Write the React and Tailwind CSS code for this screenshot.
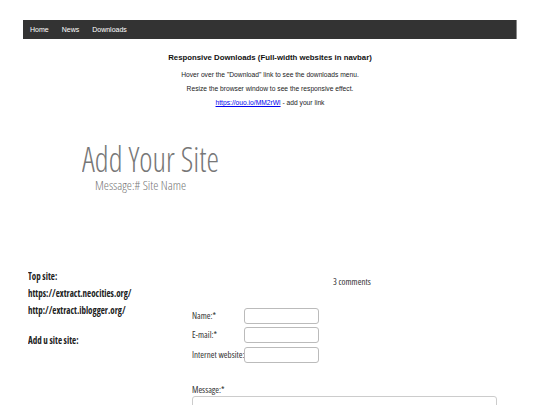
const NAV_LINKS = ['Home', 'News', 'Downloads']

// Condensed cut of Open Sans via the width axis
function Narrow({ children, className = '' }) {
  return (
    <span className={`inline-block origin-left whitespace-nowrap font-['Open_Sans',sans-serif] font-stretch-[75%] ${className}`}>
      {children}
    </span>
  )
}

function Field({ label }) {
  return (
    <div className="flex items-center h-[19.5px]">
      <span className="w-[52px] text-[9px] text-[#333]">
        <Narrow>{label}</Narrow>
      </span>
      <input
        type="text"
        className="w-[75px] h-[16px] border border-[#bbb] rounded-[3px] bg-white outline-none"
      />
    </div>
  )
}

export default function App() {
  return (
    <div className="w-[540px] h-[405px] overflow-hidden bg-white font-['Liberation_Sans',Arial,sans-serif]">
      {/* Top navbar */}
      <div className="pt-[20px] px-[23px]">
        <nav className="h-[19px] bg-[#333] border-r border-[#888] flex items-center gap-[13px] pl-[7px]">
          {NAV_LINKS.map((label) => (
            <a key={label} className="text-[7px] text-white leading-none">
              {label}
            </a>
          ))}
        </nav>
      </div>

      {/* Intro text */}
      <div className="text-center mt-[14px]">
        <h2 className="text-[7.8px] font-bold text-[#111] leading-[10px]">
          Responsive Downloads (Full-width websites in navbar)
        </h2>
        <p className="text-[6.7px] text-[#222] leading-[8px] mt-[8px]">
          Hover over the "Download" link to see the downloads menu.
        </p>
        <p className="text-[6.7px] text-[#222] leading-[8px] mt-[6px]">
          Resize the browser window to see the responsive effect.
        </p>
        <p className="text-[6.7px] text-[#222] leading-[8px] mt-[6px]">
          <a className="text-[#0000ee] underline">https://ouo.io/MM2rWl</a> - add your link
        </p>
      </div>

      {/* Site title */}
      <div className="mt-[36px] pl-[82px]">
        <h1 className="text-[34px] leading-[33px] text-[#777] font-light">
          <Narrow className="scale-x-[0.93] leading-[33px]">Add Your Site</Narrow>
        </h1>
        <p className="pl-[13px] mt-[1px] text-[13px] leading-[14px] text-[#777] font-light">
          <Narrow>Message:# Site Name</Narrow>
        </p>
      </div>

      {/* Sidebar + comments */}
      <div className="flex mt-[75px] pl-[28px]">
        <div className="w-[164px] text-[10px] font-bold text-[#222] leading-[16px]">
          <p><Narrow className="scale-x-[0.9]">Top site:</Narrow></p>
          <p><Narrow className="scale-x-[0.9]">https://extract.neocities.org/</Narrow></p>
          <p><Narrow className="scale-x-[0.9]">http://extract.iblogger.org/</Narrow></p>
          <p className="mt-[13px]"><Narrow className="scale-x-[0.9]">Add u site site:</Narrow></p>
        </div>
        <div className="flex-1">
          <p className="text-[9px] text-[#333] leading-[12px] mt-[8px] pl-[141px]">
            <Narrow>3 comments</Narrow>
          </p>
          <div className="mt-[18px]">
            <Field label="Name:*" />
            <Field label="E-mail:*" />
            <Field label="Internet website:" />
          </div>
          <p className="text-[9px] text-[#333] mt-[19px] leading-[12px]">
            <Narrow>Message:*</Narrow>
          </p>
          <textarea className="w-[305px] h-[40px] border border-[#ccc] rounded-[3px] resize-none outline-none block" />
        </div>
      </div>
    </div>
  )
}
